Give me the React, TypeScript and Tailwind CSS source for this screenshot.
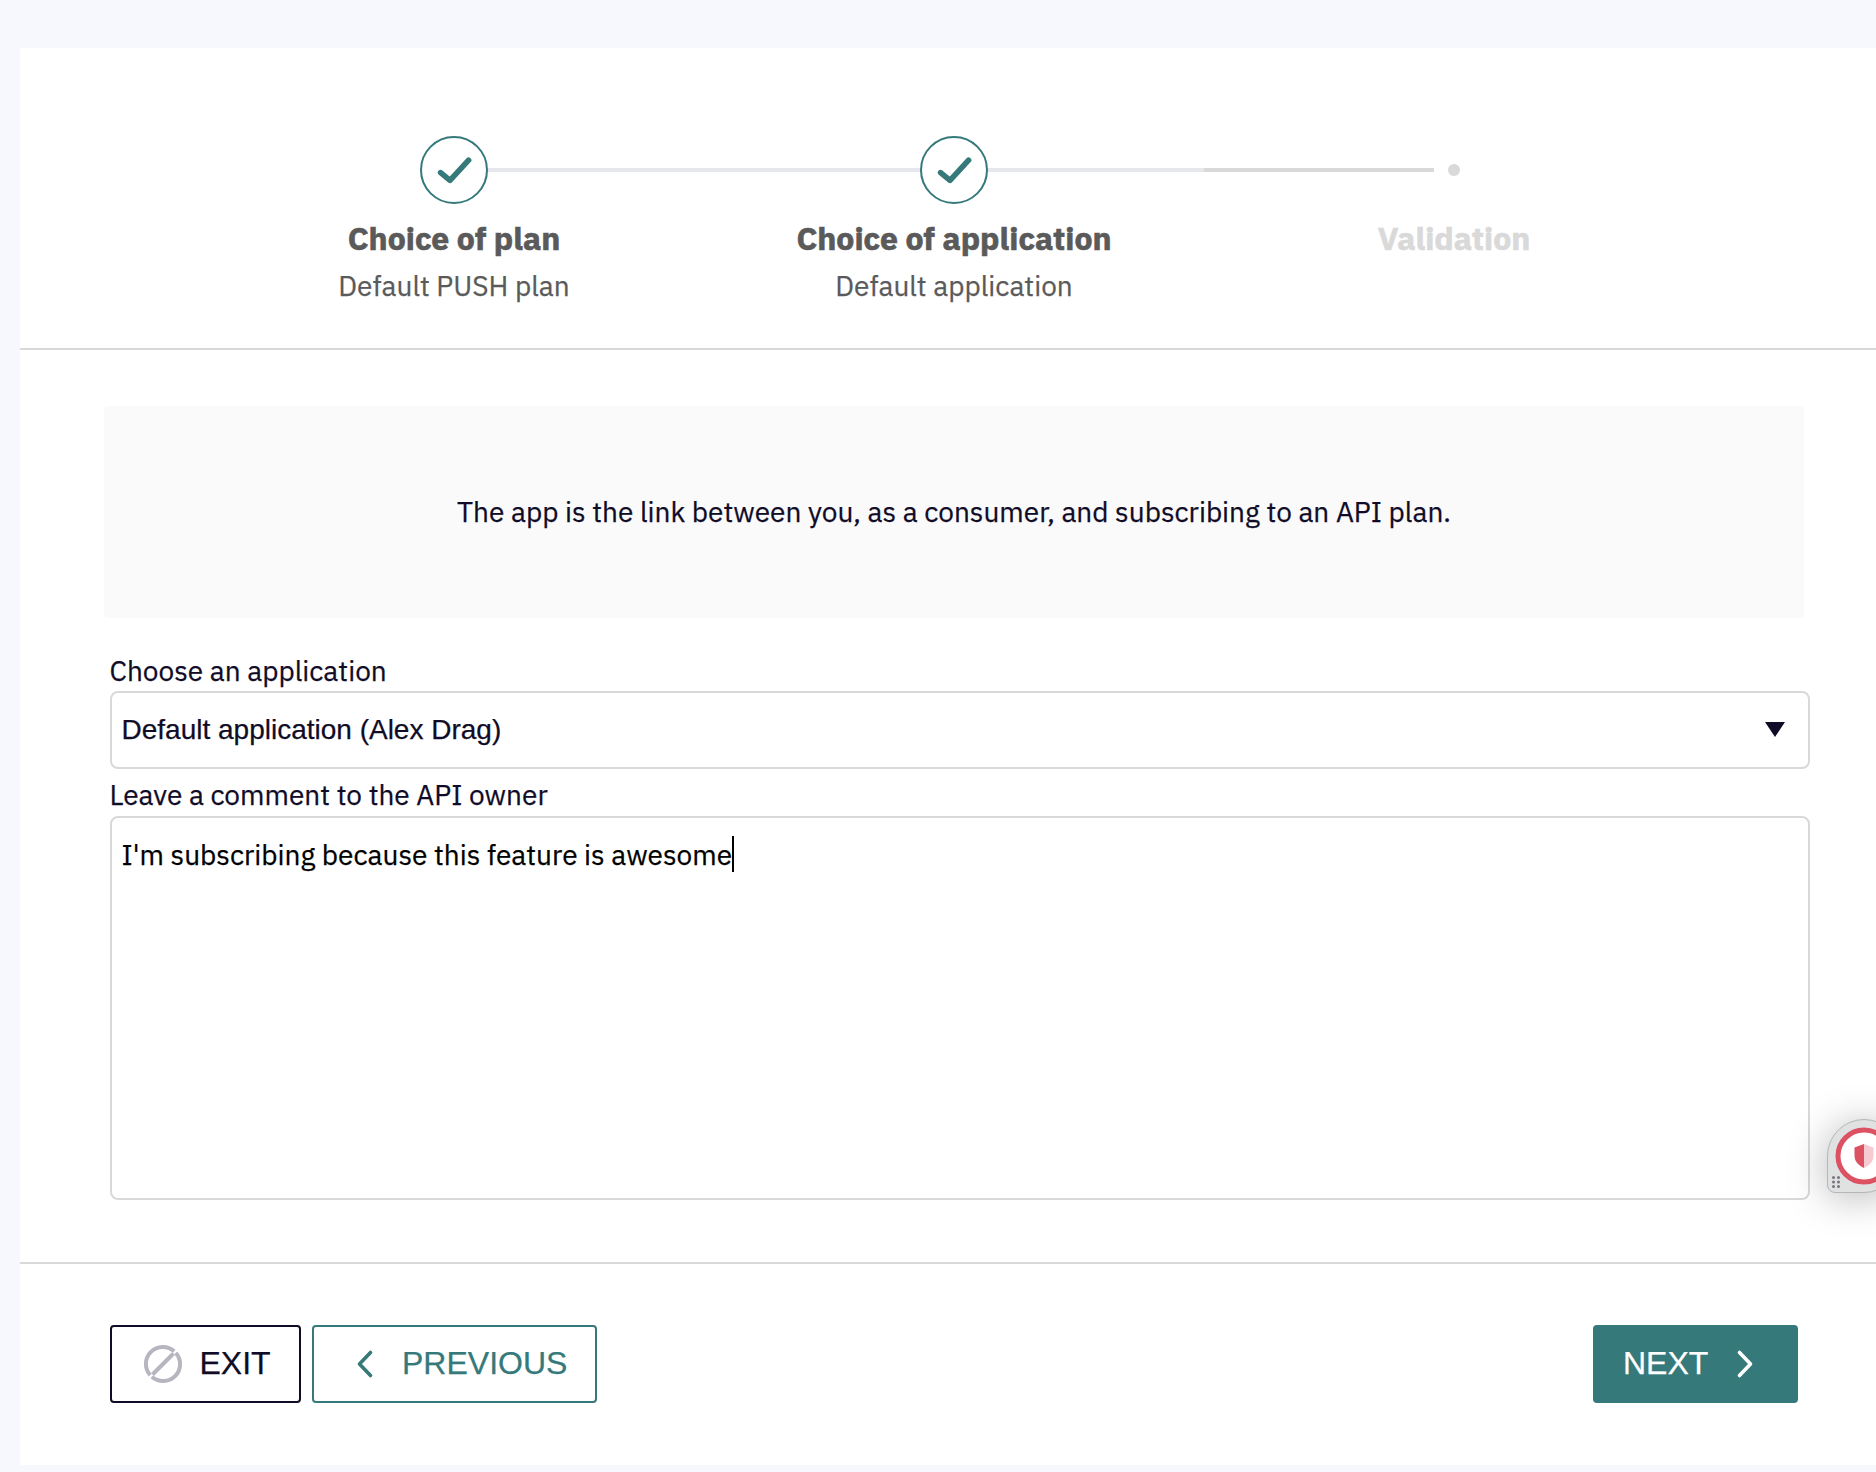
import React from "react";

const plex = "font-['IBM_Plex_Sans',Roboto,sans-serif]";
const arial = "font-['Liberation_Sans',Arial,sans-serif]";

function CheckCircle() {
  return (
    <div className="flex size-[68px] shrink-0 items-center justify-center rounded-full border-2 border-[#35797a]">
      <svg viewBox="0 0 64 64" className="size-16" fill="none" stroke="#35797a" strokeLinecap="round" strokeLinejoin="round">
        <path d="M18.600 34.600 28 42.400 46.600 22.200" strokeWidth="5.600" />
      </svg>
    </div>
  );
}

type StepProps = {
  title: string;
  subtitle?: string;
  before: string;
  after: string;
  pending?: boolean;
};

function Step({ title, subtitle, before, after, pending }: StepProps) {
  return (
    <div className="flex w-[500px] flex-col items-center">
      <div className="flex h-[68px] w-full items-center">
        <div className={`h-1 ${before}`} />
        {pending ? <div className="ml-3.5 size-3 shrink-0 rounded-full bg-[#d9d9d9]" /> : <CheckCircle />}
        <div className={`h-1 flex-1 ${after}`} />
      </div>
      <div className={`mt-[13px] text-[32px] leading-[42px] font-bold whitespace-nowrap [-webkit-text-stroke:0.6px] ${pending ? "text-[#d9d9d9]" : "text-[#5a5a5a]"}`}>{title}</div>
      <div className="mt-[9px] text-[28px] leading-[36px] whitespace-nowrap text-[#5a5a5a]">{subtitle}</div>
    </div>
  );
}

function ShieldWidget() {
  return (
    <div className="absolute top-[1119px] left-[1827px] h-[74px] w-[49px]">
      <div className="relative size-[74px] rounded-t-[37px] rounded-br-[37px] rounded-bl-lg border border-[#b5b7b7] bg-[#e0e2e2] shadow-[0_4px_40px_rgba(0,0,0,0.28)]">
        <svg viewBox="0 0 72 72" className="size-[72px]">
          <circle cx="36" cy="36" r="26" fill="#fff" stroke="#dc5263" strokeWidth="5" />
          <path d="M36 24 26.5 27.500v8c0 6 4 10 9.500 12.500z" fill="#dc5263" />
          <path d="M36 24l9.500 3.500v8c0 6-4 10-9.500 12.500z" fill="#f7c9d1" />
          {[57.5, 62, 66.500].map((y) => (
            <g key={y} fill="#77747f">
              <circle cx="5.500" cy={y} r="1.500" />
              <circle cx="10.500" cy={y} r="1.500" />
            </g>
          ))}
        </svg>
      </div>
    </div>
  );
}

export default function App() {
  return (
    <div className={`relative h-[1472px] w-full overflow-hidden bg-[#f7f8fd] pt-12 pl-5 [-webkit-text-stroke:0.25px] ${plex}`}>
      <main className="flex h-[1417px] flex-col bg-white text-[#100c27]">
        <header className="flex h-[302px] border-b-2 border-[#d9d9d9] pt-[88px] pl-[184px]">
          <Step title="Choice of plan" subtitle="Default PUSH plan" before="flex-1 bg-transparent" after="bg-[#e6e7ed]" />
          <Step title="Choice of application" subtitle="Default application" before="flex-1 bg-[#e6e7ed]" after="bg-[#e6e7ed]" />
          <Step pending title="Validation" before="w-[230px] bg-[#d9d9d9]" after="bg-transparent" />
        </header>

        <section className="h-[914px] shrink-0 border-b-2 border-[#d9d9d9] pt-14 pl-[84px]">
          <div className="flex h-[212px] w-[1700px] items-center justify-center rounded bg-[#fafafa] text-[28px] leading-9">
            The app is the link between you, as a consumer, and subscribing to an API plan.
          </div>
          <div className="mt-[35px] ml-1.5 w-[1700px]">
            <label className="-ml-[0.5px] block h-[38px] text-[28px] leading-9">Choose an application</label>
            <div className={`flex h-[78px] items-center justify-between rounded-lg border-2 border-[#d9d9d9] pr-[23px] pl-[9.5px] text-[28px] ${arial}`}>
              <span>Default application (Alex Drag)</span>
              <svg viewBox="0 0 20 16" className="mb-0.5 h-4 w-5" fill="#100c27">
                <path d="M0 1h20L10 16z" />
              </svg>
            </div>
            <label className="mt-2 mb-px -ml-[0.5px] block h-[38px] text-[28px] leading-9">Leave a comment to the API owner</label>
            <div className="flex h-[384px] items-start rounded-lg border-2 border-[#d9d9d9] pt-[19px] pl-[9.5px] text-[28px] leading-9 text-black">
              <span>I'm subscribing because this feature is awesome</span>
              <span className="-mt-px h-9 w-0.5 bg-black" />
            </div>
          </div>
        </section>

        <footer className={`flex items-start pt-[61px] pr-[78px] pl-[90px] text-[32px] leading-9 ${arial}`}>
          <button className="flex h-[78px] w-[191px] items-center rounded border-2 border-[#100c27] pl-[31px]">
            <svg viewBox="0 0 40 40" className="size-10" fill="none" stroke="#b7b5c0" strokeWidth="4">
              <path d="M7.200 31.200A17 17 0 0 1 31.200 7.200" />
              <path d="M32.800 8.800A17 17 0 0 1 8.800 32.800" />
              <path d="M9.500 30.500 30.500 9.500" />
            </svg>
            <span className="mb-0.5 ml-[16.5px]">EXIT</span>
          </button>
          <button className="ml-[11px] flex h-[78px] w-[285px] items-center rounded border-2 border-[#35797a] pl-[41px] text-[#35797a]">
            <svg viewBox="0 0 20 32" className="h-8 w-5" fill="none" stroke="#35797a" strokeWidth="3.600" strokeLinecap="round" strokeLinejoin="round">
              <path d="M15.500 4.500 4.500 16l11 11.500" />
            </svg>
            <span className="mb-0.5 ml-[27px]">PREVIOUS</span>
          </button>
          <button className="ml-auto flex h-[78px] w-[205px] items-center rounded bg-[#35797a] pl-[30px] text-white">
            <span className="mb-0.5">NEXT</span>
            <svg viewBox="0 0 20 32" className="ml-[27px] h-8 w-5" fill="none" stroke="#fff" strokeWidth="3.600" strokeLinecap="round" strokeLinejoin="round">
              <path d="M4.500 4.500 15.500 16l-11 11.500" />
            </svg>
          </button>
        </footer>
      </main>
      <ShieldWidget />
    </div>
  );
}
